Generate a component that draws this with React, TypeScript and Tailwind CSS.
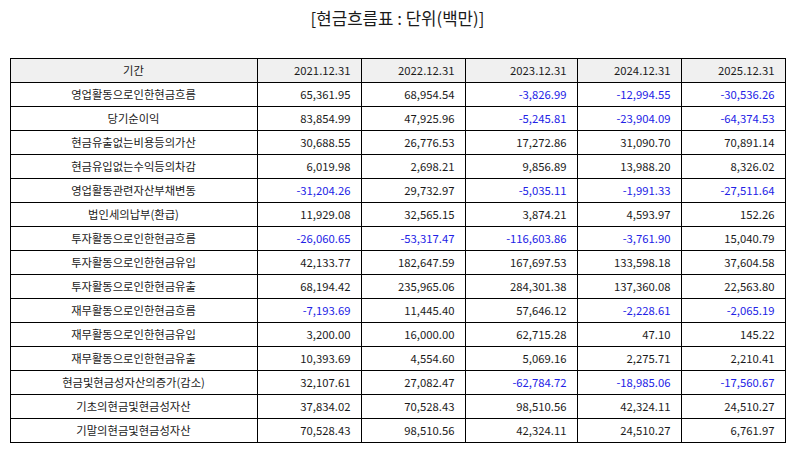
import React from "react";

const years = ["2021.12.31", "2022.12.31", "2023.12.31", "2024.12.31", "2025.12.31"];

const rows: [string, string[]][] = [
  ["영업활동으로인한현금흐름", ["65,361.95", "68,954.54", "-3,826.99", "-12,994.55", "-30,536.26"]],
  ["당기순이익", ["83,854.99", "47,925.96", "-5,245.81", "-23,904.09", "-64,374.53"]],
  ["현금유출없는비용등의가산", ["30,688.55", "26,776.53", "17,272.86", "31,090.70", "70,891.14"]],
  ["현금유입없는수익등의차감", ["6,019.98", "2,698.21", "9,856.89", "13,988.20", "8,326.02"]],
  ["영업활동관련자산부채변동", ["-31,204.26", "29,732.97", "-5,035.11", "-1,991.33", "-27,511.64"]],
  ["법인세의납부(환급)", ["11,929.08", "32,565.15", "3,874.21", "4,593.97", "152.26"]],
  ["투자활동으로인한현금흐름", ["-26,060.65", "-53,317.47", "-116,603.86", "-3,761.90", "15,040.79"]],
  ["투자활동으로인한현금유입", ["42,133.77", "182,647.59", "167,697.53", "133,598.18", "37,604.58"]],
  ["투자활동으로인한현금유출", ["68,194.42", "235,965.06", "284,301.38", "137,360.08", "22,563.80"]],
  ["재무활동으로인한현금흐름", ["-7,193.69", "11,445.40", "57,646.12", "-2,228.61", "-2,065.19"]],
  ["재무활동으로인한현금유입", ["3,200.00", "16,000.00", "62,715.28", "47.10", "145.22"]],
  ["재무활동으로인한현금유출", ["10,393.69", "4,554.60", "5,069.16", "2,275.71", "2,210.41"]],
  ["현금및현금성자산의증가(감소)", ["32,107.61", "27,082.47", "-62,784.72", "-18,985.06", "-17,560.67"]],
  ["기초의현금및현금성자산", ["37,834.02", "70,528.43", "98,510.56", "42,324.11", "24,510.27"]],
  ["기말의현금및현금성자산", ["70,528.43", "98,510.56", "42,324.11", "24,510.27", "6,761.97"]],
];

// column widths as measured from the chart
const colW = ["w-[104px]", "w-[104px]", "w-[112px]", "w-[104px]", "w-[104px]"];

export default function App() {
  return (
    <div
      className="w-[795px] h-[452px] bg-white flex flex-col items-center text-[#1a1a1a]"
      style={{ fontFamily: '"Noto Sans CJK KR", "Noto Sans", sans-serif' }}
    >
      <h1 className="mt-[5px] h-[26px] text-[16.8px] leading-[26px] font-normal">[현금흐름표 : 단위(백만)]</h1>

      <table className="mt-[27px] w-[775px] border-collapse table-fixed text-[11.3px]">
        <colgroup>
          <col className="w-[247px]" />
          {colW.map((w, i) => (
            <col key={i} className={w} />
          ))}
        </colgroup>
        <thead>
          <tr className="h-[24px] bg-[#f0f0f0]">
            <th className="border border-black font-normal text-center p-0">기간</th>
            {years.map((y) => (
              <th key={y} className="border border-black font-normal text-right pr-[10px] p-0">
                {y}
              </th>
            ))}
          </tr>
        </thead>
        <tbody>
          {rows.map(([label, vals]) => (
            <tr key={label} className="h-[24px]">
              <td className="border border-black text-center p-0">{label}</td>
              {vals.map((v, i) => (
                <td
                  key={i}
                  className={`border border-black text-right p-0 pr-[10px] ${
                    v.startsWith("-") ? "text-[#2222e6]" : ""
                  }`}
                >
                  {v}
                </td>
              ))}
            </tr>
          ))}
        </tbody>
      </table>
    </div>
  );
}
